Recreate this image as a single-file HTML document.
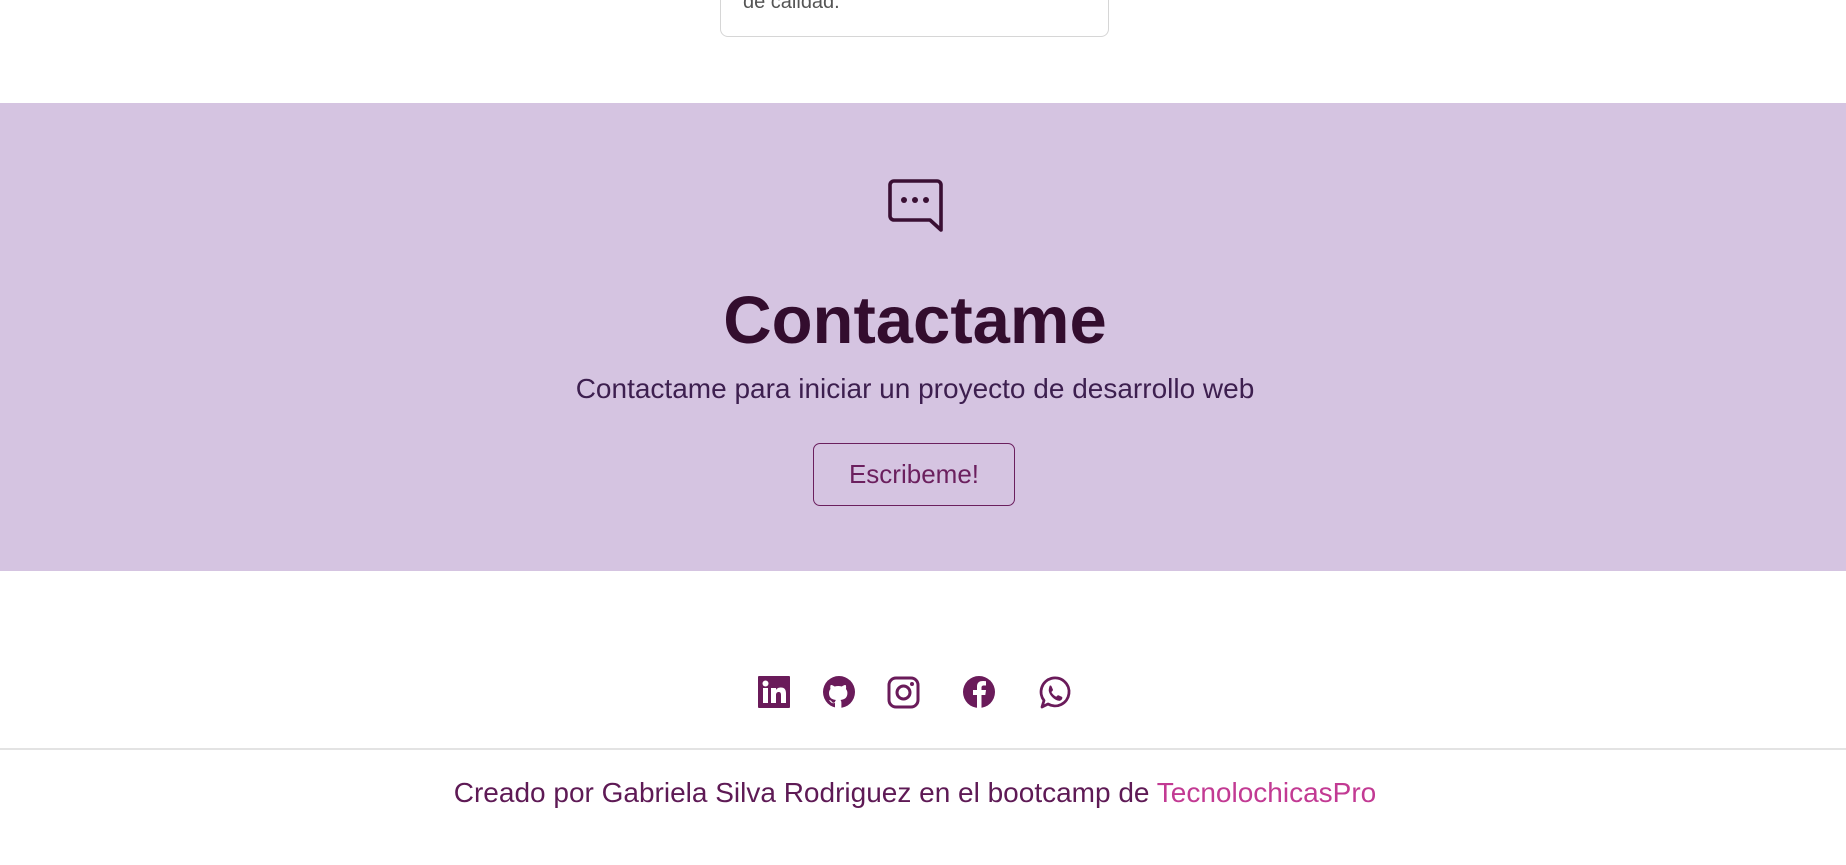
<!DOCTYPE html>
<html><head><meta charset="utf-8"><style>
*{margin:0;padding:0;box-sizing:border-box}
body{width:1846px;height:865px;background:#fff;font-family:"Liberation Sans",sans-serif;position:relative;overflow:hidden}
.card{position:absolute;left:720px;top:-20px;width:389px;height:57px;border:1px solid #d6d6d6;border-radius:8px;background:#fff}
.card span{position:absolute;left:22px;top:10px;font-size:20px;color:#555}
.band{position:absolute;left:0;top:103px;width:1846px;height:468px;background:#d5c4e1}
h1{position:absolute;left:-8px;width:1846px;top:283px;text-align:center;font-size:67px;font-weight:bold;color:#330d2e;line-height:76px}
.sub{position:absolute;left:-8px;width:1846px;top:373px;text-align:center;font-size:28px;color:#3d1f4f;line-height:32px}
.btn{position:absolute;left:813px;top:443px;width:202px;height:63px;border:1px solid #6b1f5e;border-radius:7px;color:#6b1f5e;font-size:26px;line-height:61px;text-align:center}
.hr{position:absolute;left:0;top:748px;width:1846px;height:2px;background:#e3e3e3}
.foot{position:absolute;left:-8px;width:1846px;top:776px;text-align:center;font-size:28px;color:#5e1a55;line-height:34px}
.foot a{color:#c23a93;text-decoration:none}
svg{position:absolute}
</style></head><body>
<div class="card"><span>de calidad.</span></div>
<div class="band"></div>
<svg style="left:886px;top:178px" width="58" height="56" viewBox="0 0 58 56">
<path d="M8 3H51a4 4 0 0 1 4 4V52L44 42H8a4 4 0 0 1-4-4V7a4 4 0 0 1 4-4Z" fill="none" stroke="#3a0f33" stroke-width="3.6" stroke-linejoin="round"/>
<circle cx="18" cy="22" r="3" fill="#3a0f33"/><circle cx="29" cy="22" r="3" fill="#3a0f33"/><circle cx="40" cy="22" r="3" fill="#3a0f33"/>
</svg>
<h1>Contactame</h1>
<div class="sub">Contactame para iniciar un proyecto de desarrollo web</div>
<div class="btn">Escribeme!</div>
<svg style="left:758px;top:676px" width="32" height="32" viewBox="0 0 32 32"><rect width="32" height="32" rx="1" fill="#6a1b5a"/><rect x="5" y="12" width="5" height="15" fill="#fff"/><circle cx="7.5" cy="7.5" r="3" fill="#fff"/><path d="M13 12h5v2c1-2 3-2.5 5-2.5 3.5 0 5 2 5 6V27h-5v-8c0-2-.7-3-2.3-3S18 17 18 19v8h-5Z" fill="#fff"/></svg>
<svg style="left:823px;top:676px" width="32" height="32" viewBox="0 0 32 32"><circle cx="16" cy="16" r="16" fill="#6a1b5a"/><path d="M12 32v-5c-4 1-5-2-6-3 2 0 3 2 3 2 1 1 2 1 3 0 0-1 .5-1.5 1-2-4-.5-7-2-7-7 0-1.5.5-3 1.5-4-.2-.5-.5-2 .2-4 0 0 1.5-.3 4 1.5a13 13 0 0 1 7 0c2.5-1.8 4-1.5 4-1.5.7 2 .4 3.5.2 4 1 1 1.5 2.5 1.5 4 0 5-3 6.5-7 7 .7.6 1 1.5 1 3v5Z" fill="#fff"/></svg>
<svg style="left:887px;top:676px" width="33" height="33" viewBox="0 0 33 33"><rect x="2" y="2" width="29" height="29" rx="7" fill="none" stroke="#6a1b5a" stroke-width="3"/><circle cx="16.5" cy="16.5" r="6.5" fill="none" stroke="#6a1b5a" stroke-width="3"/><circle cx="25" cy="8" r="2" fill="#6a1b5a"/></svg>
<svg style="left:963px;top:676px" width="32" height="32" viewBox="0 0 32 32"><circle cx="16" cy="16" r="16" fill="#6a1b5a"/><path d="M14 32V19h-4v-5h4v-3.5C14 6.5 16.5 5 20 5c1.5 0 3 .2 3 .2V9.5h-2c-2 0-2.5 1-2.5 2.3V14H23l-.7 5h-3.8v13Z" fill="#fff"/></svg>
<svg style="left:1038px;top:676px" width="33" height="33" viewBox="0 0 33 33"><path d="M4 31l2-6.5A14 14 0 1 1 10 28Z" fill="none" stroke="#6a1b5a" stroke-width="2.8" stroke-linejoin="round"/><path d="M12 9.5c1 0 1.3.3 1.6 1l1.3 3c.2.6 0 1-.5 1.5l-1 1c1 2 2.8 3.8 4.8 4.8l1-1c.5-.5 1-.6 1.5-.4l3 1.4c.6.3.8.7.6 1.6-.4 1.7-2 2.600-3.5 2.4-4.5-.8-9-5-10-9.700-.3-1.800.8-5.600 1.2-5.600Z" fill="#6a1b5a"/></svg>
<div class="hr"></div>
<div class="foot">Creado por Gabriela Silva Rodriguez en el bootcamp de <a>TecnolochicasPro</a></div>
</body></html>
